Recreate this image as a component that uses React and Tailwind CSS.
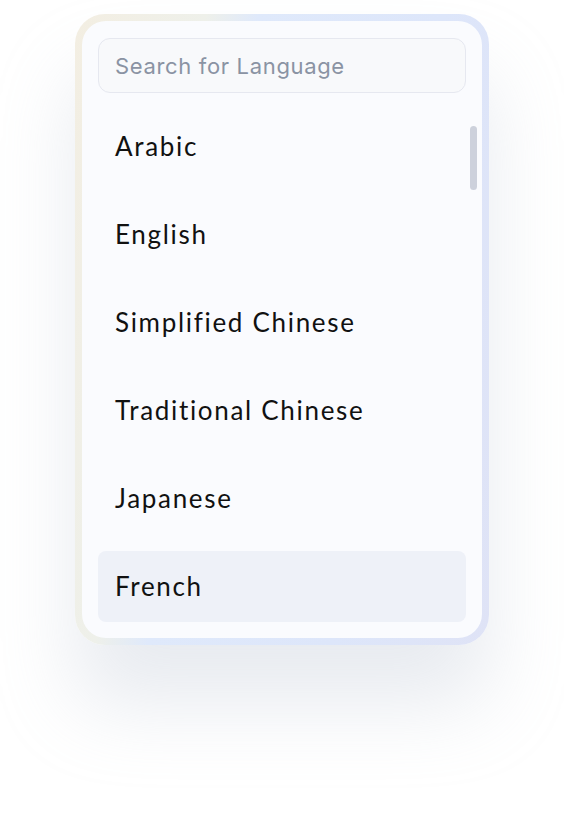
import React from 'react';

const languages = ['Arabic', 'English', 'Simplified Chinese', 'Traditional Chinese', 'Japanese', 'French'];

export default function App() {
    return (
        <div className="w-[564px] h-[834px] bg-white overflow-hidden pt-[14px] pl-[75px]">
            {/* Frosted outer frame */}
            <div className="w-[414px] h-[631px] rounded-[30px] p-[7px] bg-[linear-gradient(100deg,#f3eee2_0%,#eef0ea_25%,#dfe9fb_35%,#dde6fa_70%,#dfe3f6_100%)] shadow-[0_60px_80px_rgba(180,188,205,0.3)]">
                <div className="h-full rounded-[24px] bg-[#fafbfe] flex flex-col pt-[17px] px-[16px] relative">
                    <input
                        placeholder="Search for Language"
                        className="h-[55px] w-full rounded-[12px] border border-[#e6e8f0] bg-[#f8f9fb] px-[16px] text-[22px] tracking-[0.03em] text-[#8a93a3] placeholder:text-[#8a93a3] outline-none"
                        style={{ fontFamily: 'Inter, "Noto Sans", sans-serif' }}
                    />
                    <div className="flex flex-col gap-[17px] pt-[18px]">
                        {languages.map((l, i) => (
                            <div
                                key={l}
                                className={`h-[71px] rounded-[8px] flex items-center px-[17px] text-[26px] tracking-[0.065em] text-[#111] ${i === languages.length - 1 ? 'bg-[#eef1f8]' : ''}`}
                                style={{ fontFamily: 'Lato, "Noto Sans", sans-serif' }}
                            >
                                {l}
                            </div>
                        ))}
                    </div>
                    {/* Scrollbar thumb */}
                    <div className="absolute right-[5px] top-[105px] w-[7px] h-[64px] rounded-full bg-[#cdd1dc]" />
                </div>
            </div>
        </div>
    );
}
